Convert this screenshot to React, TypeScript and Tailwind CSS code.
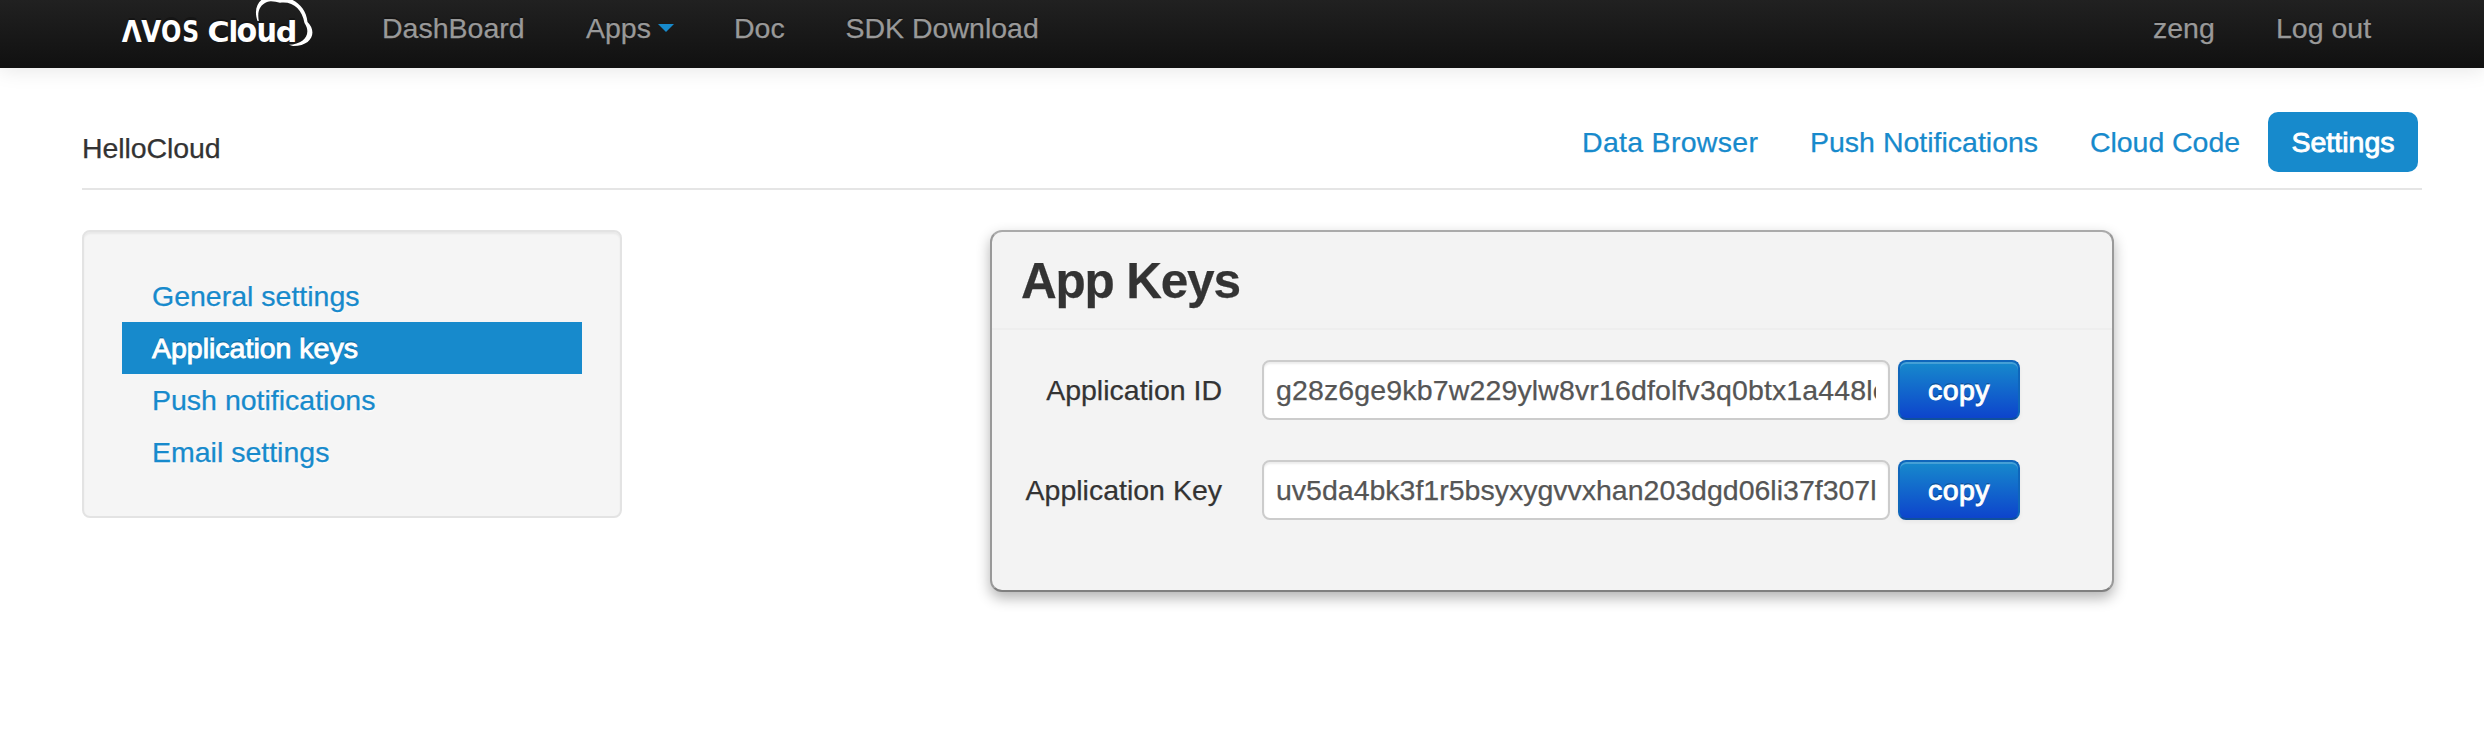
import React from "react";

const navLinks = [
  { label: "DashBoard", cls: "w-[204px]" },
  { label: "Apps", cls: "w-[148px]", caret: true },
  { label: "Doc", cls: "w-[111.5px]" },
  { label: "SDK Download", cls: "w-[260px]" },
];

const tabs = [
  { label: "Data Browser", cls: "w-[228px] tracking-[0.3px]" },
  { label: "Push Notifications", cls: "w-[280px]" },
  { label: "Cloud Code", cls: "w-[202px] tracking-[-0.05px]" },
];

const menu = [
  { label: "General settings" },
  { label: "Application keys", active: true },
  { label: "Push notifications" },
  { label: "Email settings" },
];

const keys = [
  { label: "Application ID", value: "g28z6ge9kb7w229ylw8vr16dfolfv3q0btx1a448lo", cls: "tracking-[0.14px]" },
  { label: "Application Key", value: "uv5da4bk3f1r5bsyxygvvxhan203dgd06li37f307l", cls: "" },
];

const logoLetters = [
  { ch: "Λ", x: 121.8, y: 42, size: 30, sx: 0.86, font: "DejaVu Sans" },
  { ch: "V", x: 141.3, y: 42, size: 30, sx: 0.86, font: "DejaVu Sans" },
  { ch: "O", x: 161, y: 41.7, size: 30, sx: 0.8, font: "DejaVu Sans" },
  { ch: "S", x: 182.3, y: 41.7, size: 30, sx: 0.78, font: "DejaVu Sans" },
  { ch: "C", x: 207.6, y: 41.7, size: 29, sx: 1.04, font: "DejaVu Sans" },
  { ch: "l", x: 228.6, y: 41.7, size: 28.5, sx: 1, font: "DejaVu Sans" },
  { ch: "o", x: 236.6, y: 41.7, size: 33.5, sx: 0.9, font: "DejaVu Sans" },
  { ch: "u", x: 256.6, y: 41.7, size: 33.5, sx: 0.86, font: "DejaVu Sans" },
  { ch: "d", x: 275.8, y: 41.7, size: 28.5, sx: 1.06, font: "DejaVu Sans" },
];

function Logo() {
  return (
    <svg aria-label="AVOS Cloud" className="block h-[68px] w-[200px] shrink-0" viewBox="120 0 200 68" fill="#fff">
      {logoLetters.map((l) => (
        <text
          key={l.x}
          transform={`translate(${l.x} ${l.y}) scale(${l.sx} 1)`}
          fontFamily={l.font}
          fontWeight="700"
          fontSize={l.size}
        >
          {l.ch}
        </text>
      ))}
      <path d="M257.500 21C253 8 259 0 266 -3C272 -5 276 -2 280 -1C290 -5 306 5 307.500 22C317 31 313 46 293 46L289 44.800C304 44.500 312 34 304.500 23C302 9 293 1 280 2.800C276 2 271 .5 267 2C260 5 257 11 258.800 21Z" />
    </svg>
  );
}

export default function App() {
  return (
    <div className="h-[738px] w-[2484px] overflow-hidden bg-white font-['Liberation_Sans',Arial,sans-serif] text-[28.5px] leading-10 text-[#333] [-webkit-text-stroke:0.25px_currentColor]">
      <header className="flex h-[68px] border-b-2 border-[#111] bg-linear-to-b from-[#212121] to-[#111] pl-[120px] text-[#999] shadow-[0_2px_20px_rgba(0,0,0,0.1)] [text-shadow:0_-2px_0_rgba(0,0,0,0.25)]">
        <Logo />
        <nav className="ml-[62px] flex grow pt-2">
          {navLinks.map((l) => (
            <a key={l.label} className={`flex shrink-0 whitespace-nowrap ${l.cls}`}>
              {l.label}
              {l.caret && (
                <span className="mt-4 ml-[7px] h-0 w-0 border-x-8 border-t-8 border-x-transparent border-t-[#178acc]" />
              )}
            </a>
          ))}
        </nav>
        <div className="flex pt-2">
          <a className="w-[123px]">zeng</a>
          <a className="w-[208px]">Log out</a>
        </div>
      </header>

      <main className="mr-[62px] ml-[82px]">
        <div className="flex h-[122px] justify-between border-b-2 border-[#e5e5e5] pt-11">
          <h1 className="pt-4 tracking-[-0.1px]">HelloCloud</h1>
          <div className="flex text-[#178acc]">
            {tabs.map((t) => (
              <a key={t.label} className={`shrink-0 pt-[10px] whitespace-nowrap ${t.cls}`}>
                {t.label}
              </a>
            ))}
            <a className="-ml-[24px] mr-1 h-[60px] w-[150px] rounded-[10px] bg-[#178acc] pt-[10px] text-center text-white [-webkit-text-stroke:0.9px_white]">
              Settings
            </a>
          </div>
        </div>

        <div className="mt-10 flex items-start">
          <aside className="h-[288px] w-[540px] rounded-lg border-2 border-[#e3e3e3] bg-[#f5f5f5] p-[38px] shadow-[inset_0_2px_2px_rgba(0,0,0,0.05)]">
            {menu.map((m) => (
              <a
                key={m.label}
                className={
                  m.active
                    ? "block h-[52px] bg-[#178acc] px-[30px] py-[6px] text-white [-webkit-text-stroke:0.9px_white] [text-shadow:0_-2px_0_rgba(0,0,0,0.2)]"
                    : "block h-[52px] px-[30px] py-[6px] text-[#178acc] [text-shadow:0_2px_0_rgba(255,255,255,0.5)]"
                }
              >
                {m.label}
              </a>
            ))}
          </aside>

          <section className="ml-[368px] h-[362px] w-[1124px] rounded-xl border-2 border-x-[#999] border-t-[#aaa] border-b-[#808080] bg-[#f3f3f3] shadow-[0_6px_14px_rgba(0,0,0,0.3)]">
            <h2 className="h-[98px] border-b-2 border-[#eee] px-[29px] pt-[19px] text-[49.5px] leading-[60px] font-bold tracking-[-1.2px]">
              App Keys
            </h2>
            <div className="flex flex-col gap-10 pt-[30px]">
              {keys.map((k) => (
                <div key={k.label} className="flex h-[60px]">
                  <label className="w-[230px] pt-[10px] text-right whitespace-nowrap">{k.label}</label>
                  <div className="ml-10 h-[60px] w-[628px] rounded-lg border-2 border-[#ccc] bg-white px-3 py-2 text-[#555] shadow-[inset_0_2px_2px_rgba(0,0,0,0.075)]">
                    <div className={`overflow-hidden whitespace-nowrap ${k.cls}`}>{k.value}</div>
                  </div>
                  <button className="ml-2 h-[60px] w-[122px] rounded-lg border-2 border-[#0f66bb] border-b-[#10509c] bg-linear-to-b/srgb from-[#178acc] to-[#0d44cc] tracking-[0.4px] text-white shadow-[inset_0_2px_0_rgba(255,255,255,0.2),0_2px_4px_rgba(0,0,0,0.05)] [-webkit-text-stroke:0.9px_white] [text-shadow:0_-2px_0_rgba(0,0,0,0.25)]">
                    copy
                  </button>
                </div>
              ))}
            </div>
          </section>
        </div>
      </main>
    </div>
  );
}
